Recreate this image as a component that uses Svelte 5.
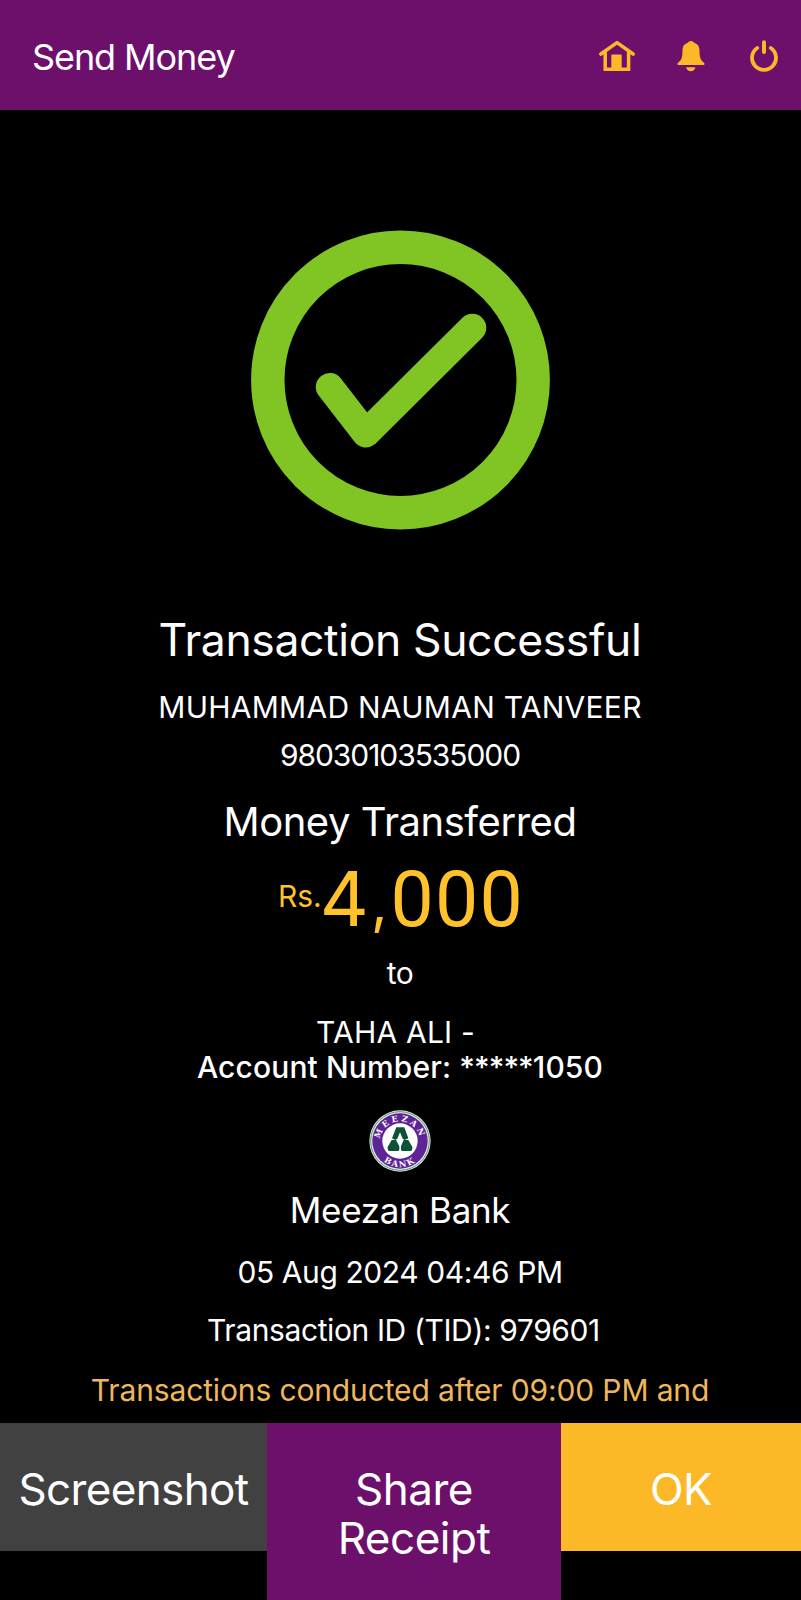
<script>
  const payer = { name: 'MUHAMMAD NAUMAN TANVEER', account: '98030103535000' };
  const payee = { name: 'TAHA ALI -', mask: '*****', digits: '1050', bank: 'Meezan Bank' };
</script>

<div class="screen">
  <header>
    <h1>Send Money</h1>
    <nav>
      <svg class="home" viewBox="0 0 36 32" width="36" height="32">
        <path d="M1.900 14 18 2.600 34.100 14" fill="none" stroke="#fdb827" stroke-width="3.600" stroke-linecap="round" stroke-linejoin="round" />
        <path d="M6.200 12V29.200H29.600V12" fill="none" stroke="#fdb827" stroke-width="3.500" />
        <path d="M12.300 31V15.600q0-1 1-1h8.400q1 0 1 1V31z" fill="#fdb827" />
      </svg>
      <svg class="bell" viewBox="0 0 28 32" width="28" height="32">
        <path d="M14 1c1.500 0 2.700.7 3 1.800 4 1.100 5.500 3.900 5.500 7.900 0 6.600 1 9.700 4.500 12 .7.600.6 2.300-.2 2.300H1.200c-.8 0-.9-1.700-.2-2.300 3.500-2.300 4.500-5.400 4.500-12 0-4 1.500-6.800 5.500-7.900C11.300 1.700 12.500 1 14 1z" fill="#fdb827" />
        <path d="M9.200 27.300h9.200c-.5 2.500-2.300 3.900-4.600 3.900s-4.100-1.400-4.600-3.900z" fill="#fdb827" />
      </svg>
      <svg class="power" viewBox="0 0 28 34" width="28" height="34">
        <path d="M7.200 9A12 12 0 1 0 20.800 9" fill="none" stroke="#fdb827" stroke-width="3.800" stroke-linecap="round" />
        <path d="M14 3.200V13" stroke="#fdb827" stroke-width="4" stroke-linecap="round" />
      </svg>
    </nav>
  </header>

  <main>
    <svg class="check" viewBox="0 0 300 300" width="300" height="300">
      <circle cx="150.500" cy="150" r="132.700" fill="none" stroke="#80c524" stroke-width="33.400" />
      <path d="M79.800 157 115.800 203.500 222.300 97.800" fill="none" stroke="#80c524" stroke-width="28" stroke-linecap="round" stroke-linejoin="round" />
    </svg>

    <h2>Transaction Successful</h2>
    <p class="payer">{payer.name}</p>
    <p class="payer-no">{payer.account}</p>
    <h3>Money Transferred</h3>
    <div class="amount"><span class="cur">Rs.</span><span class="num">4<span class="comma">,</span><span class="zeros">000</span></span></div>
    <p class="to">to</p>
    <p class="payee">{payee.name}</p>
    <p class="acct">Account Number: <span class="mask">{payee.mask}</span>{payee.digits}</p>

    <svg class="logo" viewBox="86 59 186 186" width="62" height="62">
      <defs>
        <path id="arc-top" d="M120 164a60 60 0 1 1 118 0" />
        <path id="arc-low" d="M101 152a78 78 0 0 0 156 0" />
      </defs>
      <circle cx="179" cy="152" r="92" fill="#dcebe0" />
      <circle cx="179" cy="152" r="88" fill="none" stroke="#4f7f68" stroke-width="2.500" />
      <circle cx="179" cy="152" r="83" fill="#5e2496" />
      <circle cx="179" cy="152" r="53" fill="#fff" />
      <text class="ring top" text-anchor="middle"><textPath href="#arc-top" startOffset="50%">MEEZAN</textPath></text>
      <text class="ring low" text-anchor="middle"><textPath href="#arc-low" startOffset="50%">BANK</textPath></text>
      <path d="M168 111h24l12 33-11 5-6-4-8-19-8 19-6 4-10-5z" fill="#0b5238" />
      <path d="M154 149h13l10 19v10q0 4-5 4h-24q-6 0-6-6v-6zM190 149h14l12 21v6q0 6-6 6h-23q-5 0-5-4v-10z" fill="#0b5238" />
    </svg>

    <p class="bank">{payee.bank}</p>
    <p class="date">05 Aug 2024 04:46 PM</p>
    <p class="tid">Transaction ID (TID): 979601</p>
    <p class="note">Transactions conducted after 09:00 PM and</p>
  </main>

  <footer>
    <button class="shot">Screenshot</button>
    <button class="share">Share<br />Receipt</button>
    <button class="ok">OK</button>
  </footer>
</div>

<style>
  :global(body) { background: #000; }
  .screen {
    display: flex;
    flex-direction: column;
    width: 801px;
    height: 1600px;
    overflow: hidden;
    background: #000;
    color: #fff;
    font-family: Inter, "Liberation Sans", sans-serif;
    font-weight: 400;
  }
  h1, h2, h3, p { margin: 0; font-weight: 400; white-space: nowrap; }

  header {
    box-sizing: border-box;
    flex: none;
    display: flex;
    justify-content: space-between;
    align-items: flex-start;
    height: 110px;
    padding: 0 23px 0 32px;
    background: #6c106c;
  }
  h1 { font-size: 36px; line-height: 50px; margin-top: 32px; letter-spacing: -1.08px; }
  nav { display: flex; align-items: flex-start; padding-top: 40px; }
  svg { display: block; flex: none; }
  .bell { margin-left: 42px; }
  .power { margin-left: 45px; margin-top: -1px; }

  main {
    box-sizing: border-box;
    flex: none;
    display: flex;
    flex-direction: column;
    align-items: center;
    height: 1313px;
    padding-right: 1px;
    overflow: hidden;
  }
  .check { margin-top: 120px; }
  h2 { margin-top: 80px; font-size: 44.5px; line-height: 60px; letter-spacing: -0.38px; }
  .payer { margin-top: 14px; font-size: 30px; line-height: 47px; letter-spacing: 0.26px; }
  .payer-no { margin-top: 1px; font-size: 30px; line-height: 47px; letter-spacing: -1.06px; }
  h3 { margin-top: 18px; font-size: 40px; line-height: 50px; letter-spacing: -0.45px; }
  .amount { display: flex; align-items: flex-start; margin-top: 13px; height: 76px; color: #ffc22b; }
  .cur { font-size: 30px; line-height: 72px; }
  .num { font-size: 76px; line-height: 76px; margin-left: -2px; }
  .comma { font-size: 58px; line-height: 1; margin: 0 3px 0 2px; vertical-align: 3px; }
  .zeros { font-family: Roboto, sans-serif; font-size: 77px; line-height: 1; letter-spacing: 1.2px; margin-right: -2px; }
  .to { margin-top: 20px; font-size: 30px; line-height: 34px; letter-spacing: -0.5px; }
  .payee { margin-top: 25px; margin-right: 9px; font-size: 30px; line-height: 35px; letter-spacing: 0.2px; }
  .acct { font-size: 30px; line-height: 35px; font-weight: 500; letter-spacing: 0.12px; }
  .mask { letter-spacing: -0.9px; }
  .logo { margin-top: 25px; margin-right: 1px; }
  .bank { margin-top: 18px; font-size: 35px; line-height: 40px; letter-spacing: -0.3px; }
  .date { margin-top: 22px; font-size: 30px; line-height: 40px; letter-spacing: -0.41px; }
  .tid { margin-top: 18px; margin-left: 7px; font-size: 30px; line-height: 40px; letter-spacing: -0.39px; }
  .note { margin-top: 20px; font-size: 30px; line-height: 40px; letter-spacing: -0.14px; color: #efb65c; }
  .ring { font: 700 25px "DejaVu Serif", serif; fill: #fff; }
  .top { letter-spacing: 8px; }
  .low { letter-spacing: 5px; }

  footer {
    flex: none;
    display: grid;
    grid-template-columns: 267px 294px 240px;
    align-items: start;
    height: 177px;
  }
  button {
    box-sizing: border-box;
    display: flex;
    justify-content: center;
    align-items: flex-start;
    height: 128px;
    border: 0;
    border-radius: 0;
    padding: 42px 0 0;
    color: #fff;
    font: 400 44px/49px Inter, "Liberation Sans", sans-serif;
    letter-spacing: -0.5px;
    text-align: center;
  }
  .shot { background: #414141; letter-spacing: -0.63px; }
  .share { height: 177px; background: #6c106c; }
  .ok { background: #fdb827; }
</style>
